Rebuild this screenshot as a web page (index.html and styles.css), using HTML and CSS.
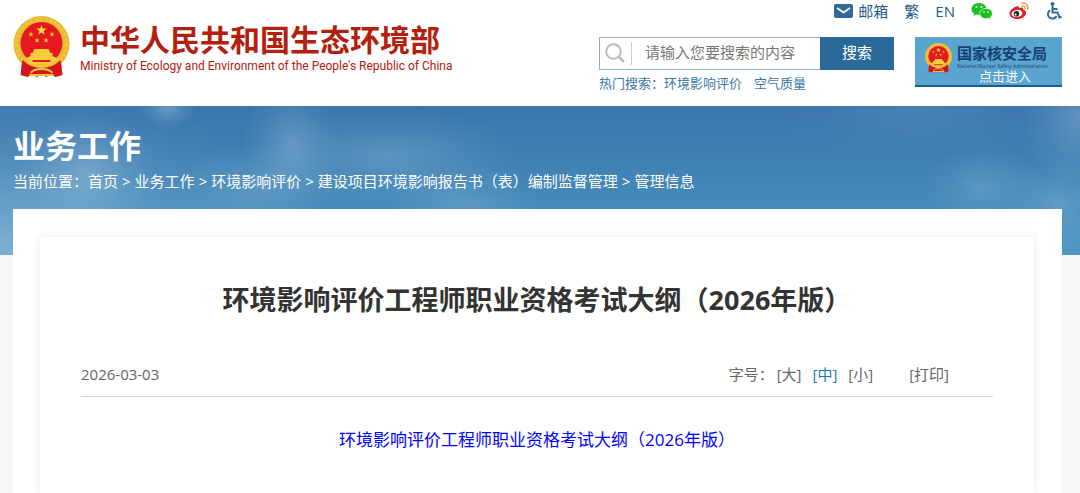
FILE: index.html
```
<!DOCTYPE html>
<html lang="zh-CN">
<head>
    <meta charset="UTF-8">
    <meta name="viewport" content="width=device-width, initial-scale=1">
    <title>环境影响评价工程师职业资格考试大纲（2026年版）</title>
    <link rel="stylesheet" href="styles.css">
</head>
<body>
<svg class="sprite" aria-hidden="true">
    <symbol id="emblem" viewBox="0 0 56 62">
        <path d="M9 42 L7 59 L14 61 L19 58 L23 61 L28 59 L33 61 L37 58 L42 61 L49 59 L47 42Z" fill="#d3141b"/>
        <circle cx="28" cy="28" r="28" fill="#e9b932"/>
        <circle cx="28" cy="28" r="25" fill="none" stroke="#f0c640" stroke-width="3" stroke-dasharray="3 2"/>
        <circle cx="28" cy="27" r="21" fill="#e51a1e"/>
        <path d="M28 9l1.300 3.600h3.900l-3.100 2.400 1.200 3.800-3.300-2.300-3.300 2.300 1.200-3.800-3.100-2.400h3.900z" fill="#ffdc3c"/>
        <g fill="#ffd23c">
            <path id="star" d="M17.500 15.500l.7 1.900h2l-1.600 1.200.6 2-1.700-1.200-1.700 1.200.6-2-1.600-1.200h2z"/>
            <use href="#star" x="21"/>
            <use href="#star" x="6" y="6"/>
            <use href="#star" x="15" y="6"/>
        </g>
        <path d="M21 33h14l2 4h-18zM17 37h22v3H17zM11 43l6-3h22l6 3-5 5H16z" fill="#f7cd3e"/>
        <path d="M19 44h18v2H19z" fill="#e51a1e"/>
        <path d="M9 44q8 8 19 8t19-8l1 7q-9 6-20 6T8 51z" fill="#d3141b"/>
        <path d="M11 43q6 7 17 7t17-7M17 57q3-4 11-4t11 4M16 59h24" fill="none" stroke="#f2c33a" stroke-width="2"/>
    </symbol>
</svg>

<header class="header">
    <a class="logo" href="#">
        <svg class="logo-emblem" aria-hidden="true"><use href="#emblem"/></svg>
        <span class="logo-text">
            <strong>中华人民共和国生态环境部</strong>
            <span class="logo-en">Ministry of Ecology and Environment of the People's Republic of China</span>
        </span>
    </a>
    <div class="tools">
        <nav class="links">
            <a class="mail" href="#">
                <svg width="19" height="14" viewBox="0 0 19 14" aria-hidden="true">
                    <rect width="19" height="14" rx="2" fill="#32699a"/>
                    <path d="M3 4l6.500 4.500L16 4" fill="none" stroke="#fff" stroke-width="1.600"/>
                </svg>
                邮箱
            </a>
            <a href="#">繁</a>
            <a href="#">EN</a>
            <a href="#" aria-label="微信">
                <svg width="22" height="18" viewBox="0 0 22 18" aria-hidden="true">
                    <path d="M8 1C3.600 1 .5 3.700.5 7c0 2 1 3.600 2.700 4.700L2.500 14l2.700-1.400c1 .3 1.900.4 2.800.4 4.300 0 7.500-2.700 7.500-6S12.300 1 8 1z" fill="#1fbf1f"/>
                    <path d="M15 6.500c-3.700 0-6.300 2.300-6.300 5.100s2.600 5.100 6.300 5.100c.8 0 1.600-.1 2.300-.3l2.200 1.200-.6-1.900c1.500-1 2.500-2.400 2.500-4.100 0-2.800-2.700-5.100-6.400-5.100z" fill="#1fbf1f" stroke="#fff" stroke-width=".7"/>
                    <g fill="#fff">
                        <circle cx="5.500" cy="5" r="1"/>
                        <circle cx="10.500" cy="5" r="1"/>
                        <circle cx="13" cy="10" r=".8"/>
                        <circle cx="17" cy="10" r=".8"/>
                    </g>
                </svg>
            </a>
            <a href="#" aria-label="微博">
                <svg width="20" height="18" viewBox="0 0 20 18" aria-hidden="true">
                    <path d="M7.500 4.500c1.500-.8 2.700-.3 2.400 1.500 2-.8 4.500-.8 4.200 1.500 1.400.4 2.900 1.400 2.900 3.500 0 3.300-4 6-8.500 6S.5 14.700.5 11.500 4 6 7.500 4.500z" fill="#dc1f2b"/>
                    <ellipse cx="8" cy="11.500" rx="5.400" ry="3.600" transform="rotate(-8 8 11.500)" fill="#fff"/>
                    <circle cx="7.500" cy="11.800" r="2.800" fill="#222"/>
                    <circle cx="6.600" cy="12.500" r="1" fill="#fff"/>
                    <path d="M13 1.200c3.700-.7 6.400 2 5.700 6M13.300 4c1.900-.3 3 .9 2.700 2.800" fill="none" stroke="#ee9a34" stroke-width="1.500" stroke-linecap="round"/>
                </svg>
            </a>
            <a href="#" aria-label="无障碍">
                <svg width="17" height="18" viewBox="0 0 17 18" aria-hidden="true">
                    <circle cx="7.500" cy="2" r="2" fill="#32699a"/>
                    <path d="M7.500 4v6.500h5l2 5 2-.8M7.500 7h5M5 8.300a4.500 4.500 0 1 0 6.500 5.700" fill="none" stroke="#32699a" stroke-width="2"/>
                </svg>
            </a>
        </nav>
        <div class="search-row">
            <form class="search">
                <div class="search-box">
                    <label for="keyword" aria-label="搜索">
                        <svg width="20" height="20" viewBox="0 0 20 20" aria-hidden="true">
                            <circle cx="8.500" cy="8.500" r="7.300" fill="none" stroke="#bbb" stroke-width="2"/>
                            <path d="M14 14l5 5" stroke="#bbb" stroke-width="2.500"/>
                        </svg>
                    </label>
                    <input type="text" id="keyword" placeholder="请输入您要搜索的内容">
                    <button type="button">搜索</button>
                </div>
                <p class="hot">热门搜索：<a href="#">环境影响评价</a><a href="#">空气质量</a></p>
            </form>
            <a class="nnsa" href="#">
                <svg class="nnsa-emblem" aria-hidden="true"><use href="#emblem"/></svg>
                <span class="nnsa-text">
                    <strong>国家核安全局</strong>
                    <span class="nnsa-en">National Nuclear Safety Administration</span>
                    <span class="nnsa-enter">点击进入</span>
                </span>
            </a>
        </div>
    </div>
</header>

<div class="banner">
    <h2>业务工作</h2>
    <nav class="crumbs">
        <span>当前位置：</span><a href="#">首页</a><i>&gt;</i><a href="#">业务工作</a><i>&gt;</i><a href="#">环境影响评价</a><i>&gt;</i><a href="#">建设项目环境影响报告书（表）编制监督管理</a><i>&gt;</i><a href="#">管理信息</a>
    </nav>
</div>

<main class="main">
    <article class="article">
        <h1>环境影响评价工程师职业资格考试大纲（2026年版）</h1>
        <div class="info">
            <time datetime="2026-03-03">2026-03-03</time>
            <div class="font-size">
                <span>字号：</span>
                <button type="button">[大]</button>
                <button type="button" class="selected">[中]</button>
                <button type="button">[小]</button>
                <button type="button" class="print">[打印]</button>
            </div>
        </div>
        <p class="attachment"><a href="#">环境影响评价工程师职业资格考试大纲（2026年版）</a></p>
    </article>
</main>
</body>
</html>
```

FILE: styles.css
```
*{
    margin: 0;
    padding: 0;
    box-sizing: border-box;
}
body{
    min-height: 100vh;
    display: flex;
    flex-direction: column;
    background: #f6f6f6;
    color: #666;
    font: 15px/20px "Open Sans", "Noto Sans CJK SC", sans-serif;
}
a{
    color: inherit;
    text-decoration: none;
}
button{
    border: 0;
    background: none;
    color: inherit;
    font: inherit;
    cursor: pointer;
}
svg{
    display: block;
    flex: none;
}
.sprite{
    position: absolute;
    width: 0;
    height: 0;
}

/* header */
.header{
    display: flex;
    justify-content: space-between;
    height: 106px;
    padding: 0 18px 0 13px;
    background: #fff;
}
.logo{
    display: flex;
    align-items: flex-start;
    gap: 10px;
    padding-top: 16px;
    color: #b3200e;
    white-space: nowrap;
}
.logo-emblem{
    width: 57px;
    height: 62px;
}
.logo-text{
    padding-top: 6px;
}
.logo-text strong{
    display: block;
    font-size: 30px;
    line-height: 36px;
}
.logo-en{
    display: block;
    font: 12px/17px Roboto, Arial, sans-serif;
}
.links{
    display: flex;
    align-items: center;
    justify-content: flex-end;
    gap: 16px;
    height: 22px;
    color: #1f5a8c;
}
.mail{
    display: flex;
    align-items: center;
    gap: 5px;
}
.search-row{
    display: flex;
    align-items: flex-start;
    gap: 21px;
    margin-top: 15px;
}
.search{
    width: 295px;
}
.search-box{
    display: flex;
    height: 33px;
    border: 1px solid #8eacc4;
    border-right: 0;
}
.search-box label{
    width: 32px;
    margin: 4px 0;
    padding: 1px 5px;
    border-right: 1px solid #ccc;
}
.search-box input{
    flex: 1;
    min-width: 0;
    padding: 0 0 4px 13px;
    border: 0;
    outline: 0;
    background: none;
    font: inherit;
}
.search-box input::placeholder{
    color: #777;
}
.search-box button{
    width: 74px;
    margin: -1px 0;
    padding-bottom: 3px;
    background: #2a6a9b;
    color: #fff;
}
.hot{
    margin-top: 3px;
    color: #3a78a8;
    font-size: 13px;
}
.hot a{
    margin-right: 12px;
}
.nnsa{
    display: flex;
    width: 147px;
    height: 50px;
    padding: 6px 0 0 10px;
    border-bottom: 2px solid #1d5d8e;
    background: #5aa5d0;
    gap: 5px;
    color: #173f70;
    white-space: nowrap;
}
.nnsa-emblem{
    width: 27px;
    height: 30px;
}
.nnsa-text strong{
    display: block;
    line-height: 20px;
}
.nnsa-en{
    display: block;
    font-size: 5px;
    line-height: 6px;
}
.nnsa-enter{
    display: block;
    padding-left: 22px;
    color: #fff;
    font-size: 13px;
    line-height: 14px;
}

/* sky banner */
.banner{
    height: 149px;
    padding: 20px 18px 0 13px;
    background:
        radial-gradient(ellipse 30px 20px at 168px 2px, rgba(255,255,255,.25), rgba(255,255,255,.08) 60%, transparent),
        radial-gradient(ellipse 70px 60px at 88px 66px, rgba(255,255,255,.2), rgba(255,255,255,.06) 60%, transparent),
        radial-gradient(ellipse 50px 70px at 27% 36px, rgba(255,255,255,.18), rgba(255,255,255,.05) 60%, transparent),
        radial-gradient(ellipse 130px 50px at 36% 50px, rgba(255,255,255,.15), rgba(255,255,255,.05) 60%, transparent),
        radial-gradient(ellipse 80px 45px at 24% 80px, rgba(255,255,255,.12), rgba(255,255,255,.04) 60%, transparent),
        radial-gradient(ellipse 80px 40px at 43% 98px, rgba(255,255,255,.12), rgba(255,255,255,.04) 60%, transparent),
        radial-gradient(ellipse 160px 40px at 85% 10px, rgba(255,255,255,.08), rgba(255,255,255,.02) 60%, transparent),
        radial-gradient(ellipse 60px 40px at 91% 80px, rgba(255,255,255,.13), rgba(255,255,255,.04) 60%, transparent),
        radial-gradient(ellipse 60px 50px at 98% 98px, rgba(255,255,255,.14), rgba(255,255,255,.04) 60%, transparent),
        radial-gradient(ellipse 60px 70px at 100% 10px, rgba(255,255,255,.2), rgba(255,255,255,.06) 60%, transparent),
        radial-gradient(ellipse 300px 180px at 0 149px, rgba(255,255,255,.26), rgba(255,255,255,.08) 60%, transparent),
        linear-gradient(#3975ad, #468cbb 70%, #5096c3);
    color: #fff;
}
.banner h2{
    font-size: 32px;
    line-height: 40px;
}
.crumbs{
    margin-top: 5px;
}
.crumbs i{
    margin: 0 4px;
    font-style: normal;
}

/* content */
.main{
    display: flex;
    flex: 1;
    margin: -46px 18px 0 13px;
    padding: 28px 28px 0 27px;
    background: #fff;
}
.article{
    flex: 1;
    padding: 43px 41px 0;
    box-shadow: 0 0 8px rgba(0,0,0,.1);
}
.article h1{
    color: #333;
    font-size: 27px;
    line-height: 40px;
    text-align: center;
}
.info{
    display: flex;
    justify-content: space-between;
    margin-top: 44px;
    padding: 0 44px 12px 0;
    border-bottom: 1px solid #cfd8dc;
}
.font-size{
    display: flex;
    gap: 11px;
}
.font-size span{
    margin-right: -8px;
}
.font-size .selected{
    color: #1b79b5;
}
.font-size .print{
    margin-left: 25px;
}
.attachment{
    margin-top: 33px;
    color: #00f;
    font-size: 17px;
    text-align: center;
}
```
